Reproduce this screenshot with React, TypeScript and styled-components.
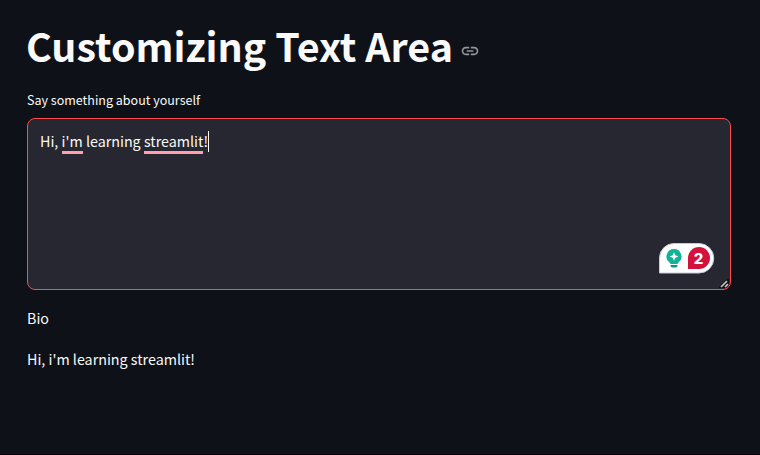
import React from "react";
import styled, { createGlobalStyle } from "styled-components";

const GlobalStyle = createGlobalStyle`
  * { box-sizing: border-box; }
  body {
    margin: 0;
    background: #0e1117;
    color: #fafafa;
    font-family: "Noto Sans CJK SC", "Noto Sans", sans-serif;
  }
`;

const Page = styled.main`
  height: 455px;
  padding: 17px 29px 0 27px;
  overflow: hidden;
  border-bottom: 1px solid #07030b;
`;

const Heading = styled.header`
  display: flex;
  align-items: center;
  height: 56px;
  margin-left: -1px;
`;

const Title = styled.h1`
  margin: 0;
  font-size: 39.4px;
  font-weight: 700;
  line-height: 56px;
  white-space: nowrap;
`;

const AnchorIcon = styled.svg`
  margin: 11px 0 0 7px;
  flex: none;
`;

const Label = styled.label`
  display: block;
  margin-top: 16px;
  height: 22px;
  font-size: 12.5px;
  line-height: 22px;
  white-space: nowrap;
`;

const Field = styled.div`
  position: relative;
  margin-top: 7px;
  height: 172px;
  padding: 11px 12px;
  border: 1px solid #ff4b4b;
  border-radius: 8px;
  background: #262730;
`;

const Line = styled.div`
  display: flex;
  font-size: 14.3px;
  line-height: 22px;
  height: 24px;
  white-space: pre;
`;

const Flagged = styled.span`
  height: 24px;
  border-bottom: 3px solid #ff9fb0;
`;

const Caret = styled.span`
  width: 1px;
  height: 21px;
  margin-top: 1px;
  background: #fafafa;
`;

const Checker = styled.svg`
  position: absolute;
  right: 15px;
  bottom: 14px;
`;

const Grip = styled.svg`
  position: absolute;
  right: 0;
  bottom: 0;
`;

const Paragraph = styled.p<{ $gap: number }>`
  margin: ${(p) => p.$gap}px 0 0;
  font-size: 14.3px;
  line-height: 24px;
  white-space: nowrap;
`;

const Count = styled.text`
  font-family: Inter, sans-serif;
  font-size: 15px;
  font-weight: 800;
  fill: #fff;
`;

export default function App() {
  return (
    <>
      <GlobalStyle />
      <Page>
        <Heading>
          <Title>Customizing Text Area</Title>
          <AnchorIcon width="20" height="20" viewBox="0 0 24 24" fill="#94969a">
            <path d="M3.9 12c0-1.71 1.39-3.1 3.1-3.1h4V7H7c-2.76 0-5 2.24-5 5s2.24 5 5 5h4v-1.9H7c-1.71 0-3.1-1.39-3.1-3.1zM8 13h8v-2H8v2zm9-6h-4v1.9h4c1.71 0 3.1 1.39 3.1 3.1s-1.39 3.1-3.1 3.1h-4V17h4c2.76 0 5-2.24 5-5s-2.24-5-5-5z" />
          </AnchorIcon>
        </Heading>
        <Label>Say something about yourself</Label>
        <Field>
          <Line>
            <span>Hi, </span>
            <Flagged>i'm</Flagged>
            <span> learning </span>
            <Flagged>streamlit</Flagged>
            <span>!</span>
            <Caret />
          </Line>
          <Checker width="58" height="33" viewBox="0 0 58 33">
            <path d="M2.5 31V16A14.5 14.5 0 0 1 17 1.5H42A14.5 14.5 0 0 1 42 31Z" fill="#fff" stroke="#c8cad6" strokeWidth="1" />
            <path d="M17 7a7.5 7.5 0 0 0-4.5 13.5q1 .8 1 1.500h7q0-.7 1-1.500A7.500 7.500 0 0 0 17 7z" fill="#10b399" />
            <path d="M13.500 23h7v.5a2 2 0 0 1-2 2h-3a2 2 0 0 1-2-2z" fill="#08997f" />
            <path d="M17 10.200l1.300 3 3 1.300-3 1.300-1.300 3-1.300-3-3-1.300 3-1.300z" fill="#fff" />
            <path d="M31 27V16A11 11 0 1 1 42 27Z" fill="#d4113a" />
            <Count x="41.500" y="21.500" textAnchor="middle">2</Count>
          </Checker>
          <Grip width="11" height="11" viewBox="0 0 11 11">
            <path d="M0 9L8 1H10V6L6 10H0Z" fill="#111216" />
            <path d="M2 9L8 3M6 9L9 6" stroke="#c6c6c6" strokeWidth="1.700" />
          </Grip>
        </Field>
        <Paragraph $gap={16}>Bio</Paragraph>
        <Paragraph $gap={17}>Hi, i'm learning streamlit!</Paragraph>
      </Page>
    </>
  );
}
